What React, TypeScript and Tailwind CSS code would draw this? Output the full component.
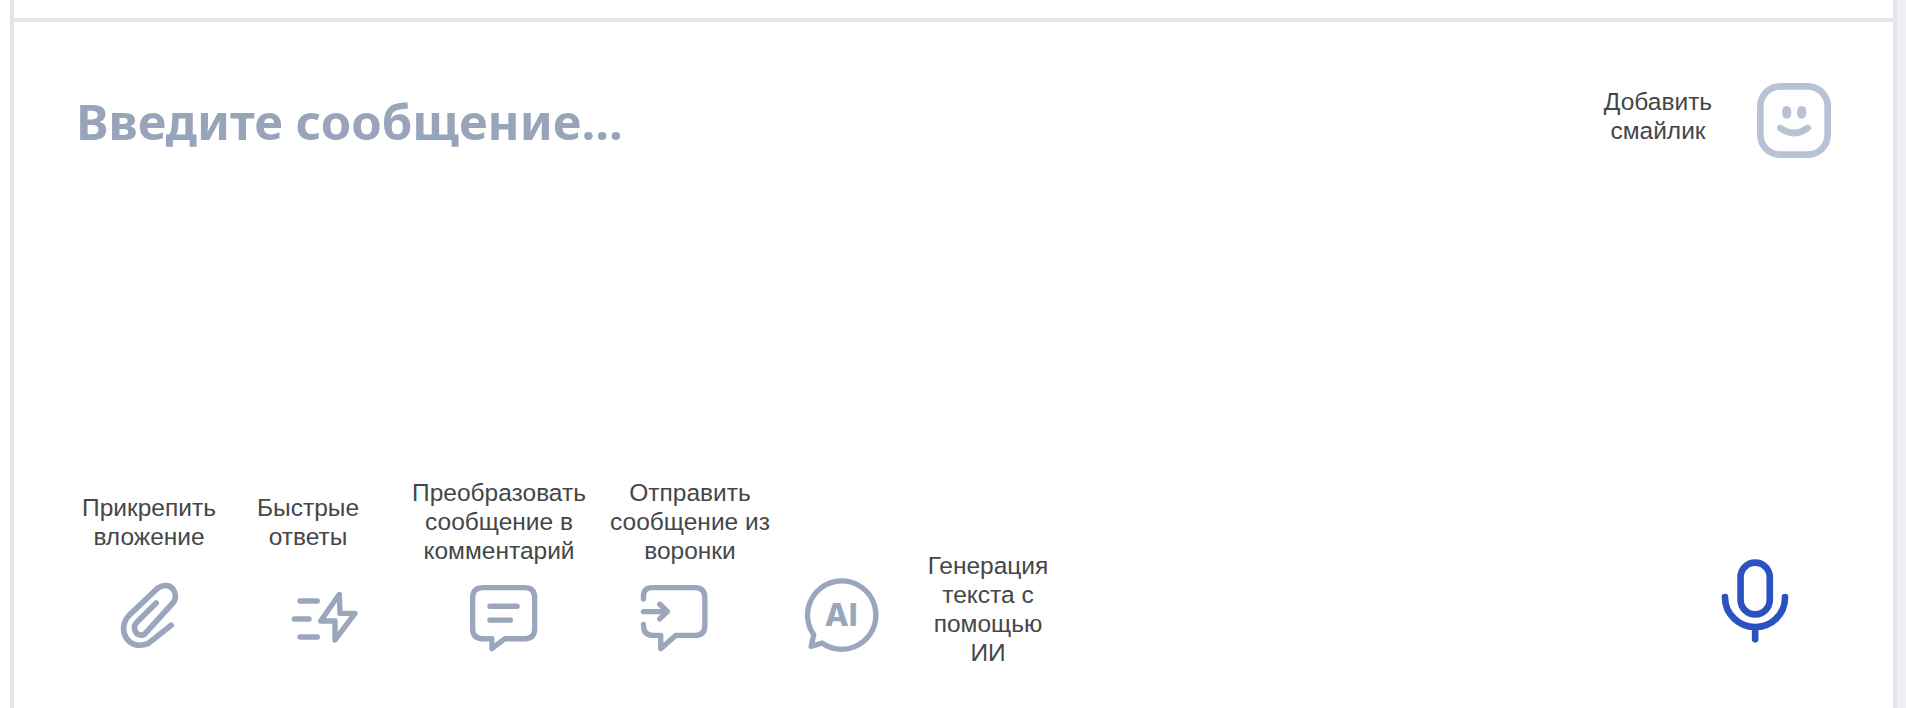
const Label = ({ children, className = "" }: { children: React.ReactNode; className?: string }) => (
  <div className={`flex h-[87px] items-center justify-center text-center text-[24.5px] leading-[29px] text-[#444648] ${className}`}>
    <span>{children}</span>
  </div>
);

const Stroke = ({ box, w, h, color = "#9aa6bc", sw = 16, children }: { box: string; w: number; h: number; color?: string; sw?: number; children: React.ReactNode }) => (
  <svg viewBox={box} width={w} height={h} fill="none" stroke={color} strokeWidth={sw} strokeLinecap="round" strokeLinejoin="round" className="block shrink-0">
    {children}
  </svg>
);

export default function App() {
  return (
    <div className="flex h-[708px] w-[1906px] overflow-hidden bg-white font-['Liberation_Sans',sans-serif]">
      <div className="w-[10px] shrink-0 bg-white" />
      <main className="flex min-w-0 flex-1 flex-col border-x-[4px] border-[#e3e5e8]">
        <div className="h-[22px] shrink-0 border-b-[4px] border-[#e3e5e8]" />
        <div className="flex flex-1 flex-col justify-between">
          <div className="flex items-start justify-between pl-[62px] pr-[62px] pt-[61px]">
            <div className="mt-[4px] text-[49px] font-bold leading-[68px] text-[#98a4ba] font-['Noto_Sans',sans-serif]">Введите сообщение...</div>
            <div className="flex items-center">
              <div className="mb-[10px] w-[130px] text-center text-[24.5px] leading-[29px] text-[#444648]">Добавить смайлик</div>
              <div className="ml-[34px]">
                <Stroke box="618 250 222 225" w={74} h={75} color="#b7c3d5" sw={20}>
                  <rect x="628" y="260" width="202" height="205" rx="60" />
                  <path d="M688 385 Q730 415 770 385" />
                  <ellipse cx="707" cy="338" rx="4" ry="9" fill="#b7c3d5" />
                  <ellipse cx="752" cy="338" rx="4" ry="9" fill="#b7c3d5" />
                </Stroke>
              </div>
            </div>
          </div>

          <div className="flex items-end pb-[53px] pl-[60px] pr-[101px]">
            <div className="w-[150px]">
              <Label>Прикрепить вложение</Label>
              <div className="mt-[13px] mb-[2px] ml-[42px]">
                <Stroke box="170 355 200 225" w={67} h={75} sw={17}>
                  <path d="M290 430 L232 488 C218 502 226 532 254 525 L340 430 C362 405 335 360 295 385 L208 468 C170 510 205 575 265 552 L335 497" />
                </Stroke>
              </div>
            </div>
            <div className="w-[168px]">
              <Label className="px-[40px]">Быстрые ответы</Label>
              <div className="mt-[15px] ml-[66px] flex h-[75px] items-center">
                <Stroke box="690 385 210 165" w={70} h={55}>
                  <path d="M720 418 H772 M703 472 H747 M720 526 H772" />
                  <path d="M838 398 L782 478 H825 V535 L885 455 H840 Z" />
                </Stroke>
              </div>
            </div>
            <div className="ml-[18px] w-[178px]">
              <Label>Преобразовать сообщение в комментарий</Label>
              <div className="mt-[15px] ml-[58px] flex h-[75px] items-center">
                <Stroke box="1225 375 215 205" w={72} h={68}>
                  <path d="M1270 386 H1395 Q1425 386 1425 416 V510 Q1425 540 1395 540 H1335 L1296 570 V540 H1268 Q1238 540 1238 510 V416 Q1238 386 1270 386Z" />
                  <path d="M1290 442 H1372 M1290 484 H1352" />
                </Stroke>
              </div>
            </div>
            <div className="ml-[21px] w-[162px]">
              <Label>Отправить сообщение из воронки</Label>
              <div className="mt-[15px] ml-[30px] flex h-[75px] items-center">
                <Stroke box="240 375 210 205" w={70} h={68}>
                  <path d="M253 420 V412 Q253 386 280 386 H408 Q438 386 438 416 V500 Q438 530 408 530 H350 L305 570 V530 H283 Q253 530 253 500 V497" />
                  <path d="M253 458 H325 M302 436 L325 458 L302 480" />
                </Stroke>
              </div>
            </div>
            <div className="ml-[31px] mb-[3px] flex h-[75px] items-center">
              <svg viewBox="725 350 240 235" width={80} height={78} className="block shrink-0">
                <path d="M785 552 A103 103 0 1 0 760 527 L752 562 Z" fill="none" stroke="#9aa6bc" strokeWidth={16} strokeLinejoin="round" />
                <text x="843" y="500" textAnchor="middle" fontSize="94" fontWeight="800" fill="#9aa6bc" fontFamily="Inter, sans-serif">AI</text>
              </svg>
            </div>
            <div className="ml-[31px] mb-[3px] w-[150px]">
              <Label>Генерация текста с помощью ИИ</Label>
            </div>
            <div className="ml-auto mb-[11px]">
              <Stroke box="115 50 220 260" w={73} h={87} color="#2b52c1" sw={20}>
                <rect x="180" y="66" width="88" height="156" rx="44" />
                <path d="M133 170 C133 225 180 260 224 260 C270 260 314 225 314 170 M224 260 V297" />
              </Stroke>
            </div>
          </div>
        </div>
      </main>
      <div className="w-[9px] shrink-0 bg-[#eef0f6]" />
    </div>
  );
}
